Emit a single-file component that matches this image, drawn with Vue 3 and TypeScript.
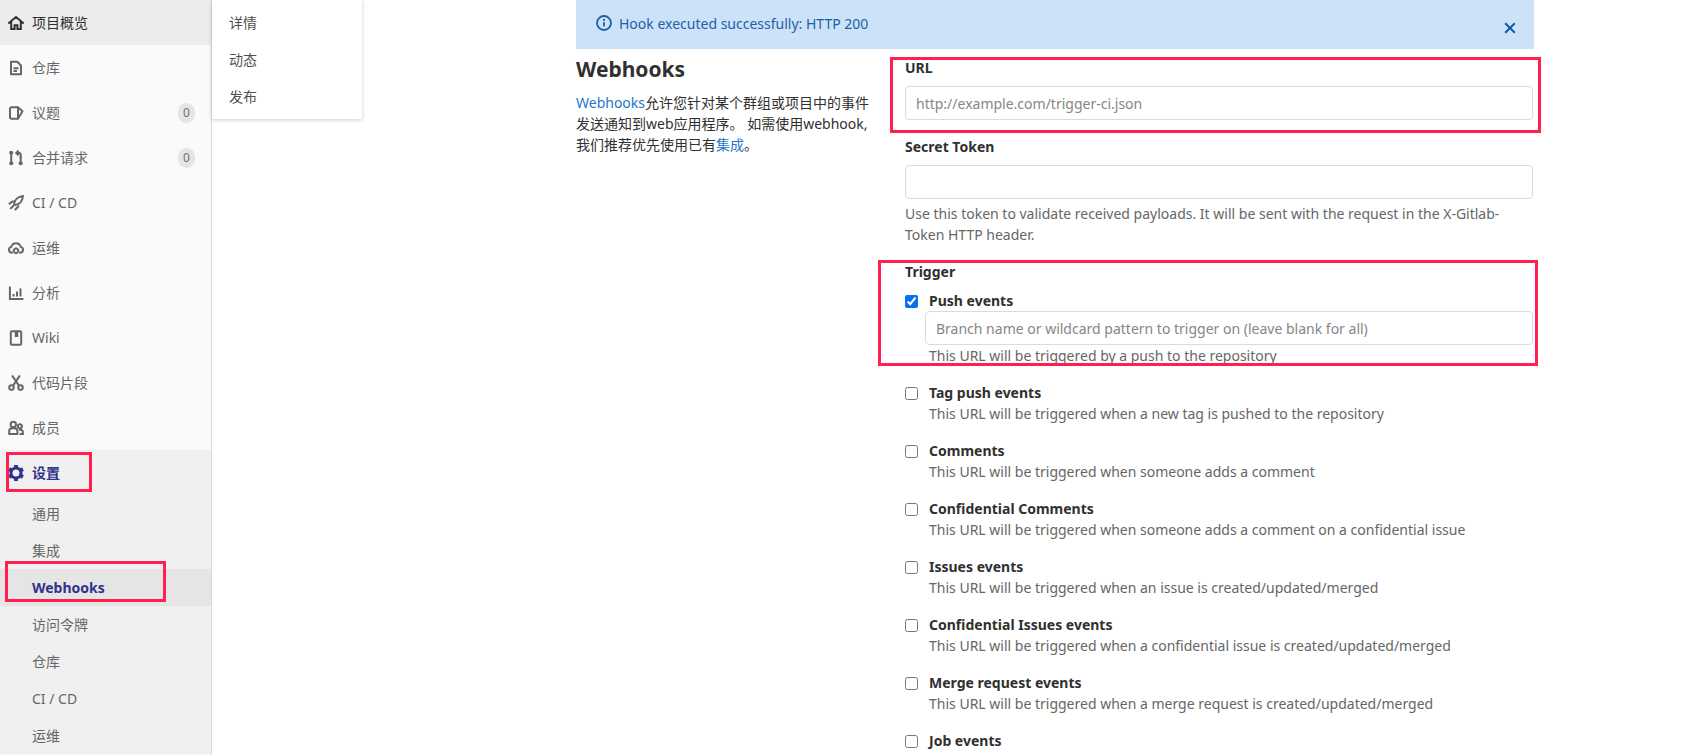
<template>
  <div class="page">
    <aside class="sidebar">
      <nav class="nav">
        <a
          v-for="item in navItems"
          :key="item.label"
          class="nav__row"
          :class="{ 'nav__row--current': item.current }"
        >
          <svg class="nav__icon" viewBox="0 0 16 16" v-html="item.icon"></svg>
          <span class="nav__label">{{ item.label }}</span>
          <span v-if="item.count !== undefined" class="nav__badge">{{ item.count }}</span>
        </a>
      </nav>
      <div class="settings">
        <a class="nav__row nav__row--active">
          <svg class="nav__icon" viewBox="0 0 16 16" v-html="gearIcon"></svg>
          <span class="nav__label">设置</span>
        </a>
        <a
          v-for="sub in settingsItems"
          :key="sub"
          class="sub"
          :class="{ 'sub--active': sub === 'Webhooks' }"
        >{{ sub }}</a>
      </div>
    </aside>

    <main class="main">
      <div class="alert">
        <svg class="alert__icon" viewBox="0 0 16 16">
          <circle cx="8" cy="8" r="7" fill="none" stroke="currentColor" stroke-width="1.8" />
          <rect x="7.1" y="7" width="1.8" height="4.6" rx=".5" fill="currentColor" />
          <circle cx="8" cy="4.9" r="1.1" fill="currentColor" />
        </svg>
        <span>Hook executed successfully: HTTP 200</span>
        <svg class="alert__close" viewBox="0 0 12 12">
          <path d="M1.2 1.2l9.6 9.6m0-9.600l-9.600 9.600" fill="none" stroke="currentColor" stroke-width="2" />
        </svg>
      </div>

      <div class="columns">
        <section class="intro">
          <h4>Webhooks</h4>
          <p>
            <a>Webhooks</a>允许您针对某个群组或项目中的事件发送通知到web应用程序。 如需使用webhook, 我们推荐优先使用已有<a>集成</a>。
          </p>
        </section>

        <form class="form">
          <div class="field">
            <label class="field__label">URL</label>
            <input class="input" placeholder="http://example.com/trigger-ci.json" />
          </div>
          <div class="field field--token">
            <label class="field__label">Secret Token</label>
            <input class="input" />
            <p class="help">Use this token to validate received payloads. It will be sent with the request in the X-Gitlab-Token HTTP header.</p>
          </div>
          <div class="trigger">
            <label class="field__label">Trigger</label>
            <div class="event event--push">
              <input type="checkbox" checked />
              <div class="event__body">
                <strong>Push events</strong>
                <input class="input" placeholder="Branch name or wildcard pattern to trigger on (leave blank for all)" />
                <p>This URL will be triggered by a push to the repository</p>
              </div>
            </div>
            <div v-for="ev in events" :key="ev.name" class="event">
              <input type="checkbox" />
              <div class="event__body">
                <strong>{{ ev.name }}</strong>
                <p v-if="ev.help">{{ ev.help }}</p>
              </div>
            </div>
          </div>
        </form>
      </div>
    </main>

    <!-- hand-drawn annotations over the page -->
    <div class="mark mark--settings"></div>
    <div class="mark mark--webhooks"></div>
    <div class="mark mark--url"></div>
    <div class="mark mark--trigger"></div>

    <div class="flyout">
      <a v-for="f in flyoutItems" :key="f">{{ f }}</a>
    </div>
  </div>
</template>

<script setup lang="ts">
interface NavItem {
  label: string
  icon: string
  count?: number
  current?: boolean
}

const st = 'fill="none" stroke="currentColor" stroke-width="2"'

const navItems: NavItem[] = [
  {
    label: '项目概览',
    current: true,
    icon: `<path d="M.3 8.600L8 2l7.700 6.600M3.200 6.500v7.500h3.400v-3.800h2.800V14h3.400V6.500" ${st} stroke-width="2.200"/>`,
  },
  {
    label: '仓库',
    icon: `<path d="M3 1.800h6.300L13 5.500v8.700H3z" ${st} stroke-linejoin="round" stroke-width="2.200"/><path d="M5.500 8.200h5M5.500 11h3.500" ${st} stroke-width="1.800"/>`,
  },
  {
    label: '议题',
    count: 0,
    icon: `<path d="M10 2.300H3.300a1.300 1.300 0 0 0-1.300 1.300v8.800a1.300 1.300 0 0 0 1.300 1.300H10" ${st} stroke-width="2.200"/><path d="M10 2.300l4.500 3.900L10 13.700z" ${st} stroke-linejoin="round"/>`,
  },
  {
    label: '合并请求',
    count: 0,
    icon: `<path d="M3.200 3v10M12.700 6.500V13" ${st}/><circle cx="3.200" cy="2.800" r="2" fill="currentColor"/><circle cx="3.200" cy="13.200" r="2" fill="currentColor"/><circle cx="12.700" cy="13.200" r="2" fill="currentColor"/><path d="M12.700 8V4.500c0-.9-.6-1.500-1.500-1.500H8.500M10.600.6L8.200 3l2.400 2.400" ${st}/>`,
  },
  {
    label: 'CI / CD',
    icon: `<path d="M15 1C10.200 1.500 6.500 4.500 6 9l1 1c4.500-.5 7.500-4 8-9z" ${st} stroke-linejoin="round"/><path d="M1.500 8.600L4.800 6.200M7.400 14.500l3-3.200M2.800 13.400l2.600-2.600" ${st} stroke-linecap="round" stroke-width="2.200"/>`,
  },
  {
    label: '运维',
    icon: `<path d="M4 12.800A3.100 3.100 0 0 1 3.300 6.700a4.900 4.900 0 0 1 9.400 0A3.100 3.100 0 0 1 12 12.800" ${st} stroke-linecap="round"/><circle cx="8" cy="10.800" r="2.200" fill="none" stroke="currentColor" stroke-width="1.800"/><path d="M8 7.500v1.200M8 12.900v1.200M4.700 10.800h1.200M10.100 10.800h1.200" ${st} stroke-width="1.600"/>`,
  },
  {
    label: '分析',
    icon: `<path d="M1.900 1.500v12.600h13.500" ${st} stroke-width="2.200"/><path d="M5.600 9v2.600M9 6.500v5.100M12.500 3.500v8.100" ${st}/>`,
  },
  {
    label: 'Wiki',
    icon: `<rect x="2.800" y="1.300" width="10.400" height="13.400" rx="1.200" ${st} stroke-width="2.200"/><path d="M8.500 1.500v5.500" stroke="currentColor" stroke-width="3.500" fill="none"/>`,
  },
  {
    label: '代码片段',
    icon: `<circle cx="3.500" cy="12.600" r="2.300" ${st} stroke-width="2.200"/><circle cx="12.500" cy="12.600" r="2.300" ${st} stroke-width="2.200"/><path d="M5 10.600L11.900.5M11 10.600L4.100.5" ${st}/>`,
  },
  {
    label: '成员',
    icon: `<circle cx="5.300" cy="4.500" r="2.700" ${st}/><path d="M1.200 14V11a2.900 2.900 0 0 1 2.900-2.800h2.400A2.900 2.900 0 0 1 9.400 11v3z" ${st} stroke-linejoin="round" stroke-width="2.200"/><circle cx="11.900" cy="6.200" r="2" ${st} stroke-width="1.800"/><path d="M11 9.800h1.700a2.200 2.200 0 0 1 2.200 2.200v2h-3.400" ${st} stroke-width="2.200"/>`,
  },
]

const gearTeeth = [0, 60, 120, 180, 240, 300]
  .map(a => `<path d="M8 0v4" transform="rotate(${a} 8 8)" stroke="currentColor" stroke-width="3.800" fill="none"/>`)
  .join('')
const gearIcon = `<circle cx="8" cy="8" r="5" fill="none" stroke="currentColor" stroke-width="3"/>${gearTeeth}`

const settingsItems = ['通用', '集成', 'Webhooks', '访问令牌', '仓库', 'CI / CD', '运维']
const flyoutItems = ['详情', '动态', '发布']

const events = [
  { name: 'Tag push events', help: 'This URL will be triggered when a new tag is pushed to the repository' },
  { name: 'Comments', help: 'This URL will be triggered when someone adds a comment' },
  { name: 'Confidential Comments', help: 'This URL will be triggered when someone adds a comment on a confidential issue' },
  { name: 'Issues events', help: 'This URL will be triggered when an issue is created/updated/merged' },
  { name: 'Confidential Issues events', help: 'This URL will be triggered when a confidential issue is created/updated/merged' },
  { name: 'Merge request events', help: 'This URL will be triggered when a merge request is created/updated/merged' },
  { name: 'Job events', help: '' },
]
</script>

<style>
html,
body {
  margin: 0;
  overflow: hidden;
  background: #fff;
}
</style>

<style scoped>
.page {
  position: relative;
  display: flex;
  height: 755px;
  overflow: hidden;
  font-family: 'Noto Sans', 'Noto Sans CJK SC', sans-serif;
  font-size: 14px;
  line-height: 21px;
  color: #303030;
}

.sidebar {
  flex: none;
  box-sizing: border-box;
  width: 212px;
  background: #fafafa;
  border-right: 1px solid #dbdbdb;
}

.nav__row {
  display: flex;
  align-items: center;
  height: 45px;
  padding: 0 16px 0 8px;
  color: #666;
}

.nav__row--current {
  background: #ececec;
  color: #303030;
}

.nav__row--active {
  color: #32328a;
  font-weight: 700;
}

.nav__icon {
  flex: none;
  width: 16px;
  height: 16px;
  margin-right: 8px;
}

.nav__label {
  flex: 1;
}

.nav__badge {
  box-sizing: border-box;
  width: 17px;
  height: 20px;
  border-radius: 9px;
  background: #e5e5e5;
  font-size: 12px;
  line-height: 20px;
  text-align: center;
  color: #707070;
}

.settings {
  background: #f0f0f0;
}

.sub {
  display: flex;
  align-items: center;
  height: 37px;
  padding-left: 32px;
  color: #666;
}

.sub--active {
  background: #e5e5e5;
  color: #32328a;
  font-weight: 700;
}

.main {
  flex: none;
  box-sizing: border-box;
  width: 958px;
  margin-left: 364px;
}

.alert {
  display: flex;
  align-items: center;
  height: 49px;
  padding: 0 18px 3px 20px;
  box-sizing: border-box;
  background: #cbe2f9;
  color: #1f5fa8;
}

.alert__icon {
  width: 16px;
  height: 16px;
  margin-right: 7px;
}

.alert__close {
  width: 12px;
  height: 12px;
  margin: 9px 0 0 auto;
  color: #0b5cad;
}

.columns {
  display: grid;
  grid-template-columns: 299px 628px;
  column-gap: 30px;
}

.intro h4 {
  margin: 5px 0 8px;
  font-size: 21px;
  line-height: 30px;
  font-weight: 700;
  color: #303030;
}

.intro p {
  margin: 0;
}

.intro a {
  color: #1f75cb;
}

.field {
  display: flex;
  flex-direction: column;
}

.field__label {
  font-weight: 700;
  line-height: 21px;
  margin-bottom: 8px;
}

.field:first-child {
  padding-top: 8px;
}

.field--token {
  margin-top: 16px;
}

.input {
  box-sizing: border-box;
  width: 100%;
  height: 34px;
  padding: 0 10px;
  border: 1px solid #dbdbdb;
  border-radius: 4px;
  background: #fff;
  font: inherit;
  outline: none;
}

.input::placeholder {
  color: #868686;
  opacity: 1;
}

.help {
  margin: 4px 0 0;
  color: #666;
}

.trigger {
  margin-top: 16px;
}

.trigger .field__label {
  display: block;
  margin-bottom: 8px;
}

.event {
  display: flex;
  height: 58px;
}

.event--push {
  height: 87px;
  margin-bottom: 5px;
}

.event input[type='checkbox'] {
  flex: none;
  width: 13px;
  height: 13px;
  margin: 5px 11px 0 0;
  accent-color: #0b6ff2;
}

.event__body {
  flex: 1;
  min-width: 0;
}

.event__body strong {
  display: block;
  font-weight: 700;
}

.event__body p {
  margin: 0;
  color: #666;
}

.event--push .event__body {
  margin-left: -4px;
}

.event--push .event__body strong {
  margin-left: 4px;
}

.event--push .event__body p {
  margin-left: 4px;
}

.flyout {
  position: absolute;
  left: 212px;
  top: 0;
  width: 150px;
  height: 119px;
  padding-top: 4px;
  box-sizing: border-box;
  background: #fff;
  box-shadow: 0 1px 4px rgba(0, 0, 0, 0.2);
  color: #505050;
}

.flyout a {
  display: flex;
  align-items: center;
  height: 37px;
  padding-left: 17px;
}

.mark {
  position: absolute;
  box-sizing: border-box;
  border: 3px solid #ff1f50;
}

.mark--settings {
  left: 6px;
  top: 452px;
  width: 86px;
  height: 40px;
}

.mark--webhooks {
  left: 5px;
  top: 561px;
  width: 161px;
  height: 41px;
}

.mark--url {
  left: 890px;
  top: 57px;
  width: 651px;
  height: 76px;
}

.mark--trigger {
  left: 878px;
  top: 260px;
  width: 660px;
  height: 106px;
}
</style>
